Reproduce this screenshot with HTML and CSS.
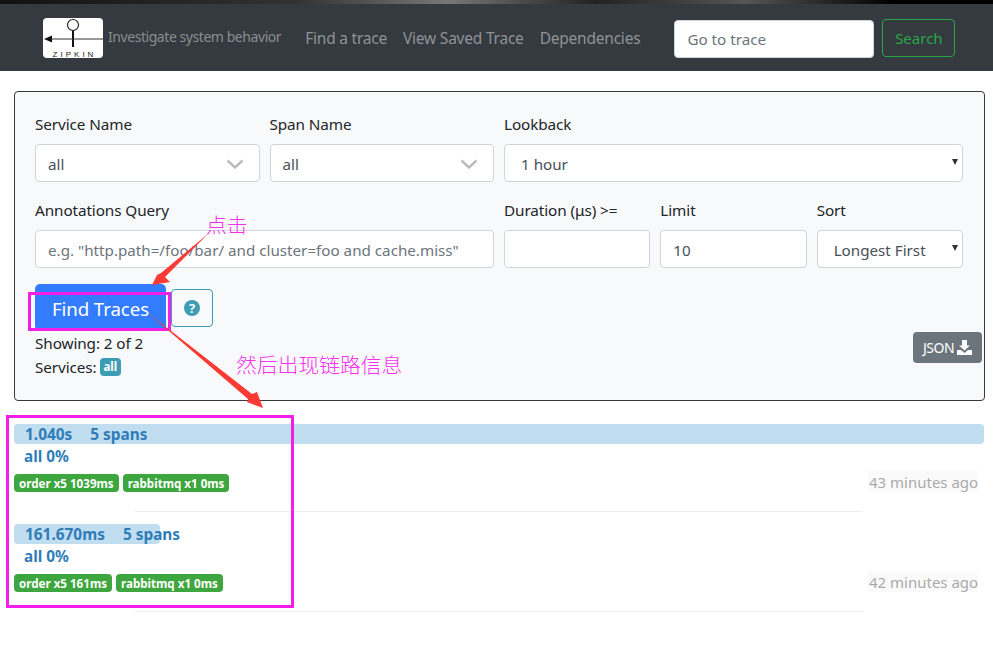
FILE: index.html
```html
<!DOCTYPE html>
<html lang="en">
<head>
<meta charset="utf-8">
<title>Zipkin</title>
<link rel="stylesheet" href="styles.css">
</head>
<body>
<div class="strip"></div>
<nav class="nav">
  <svg class="logo" width="60" height="40" viewBox="0 0 60 40">
    <rect width="60" height="40" rx="4" fill="#fff"/>
    <circle cx="30" cy="7" r="5.5" fill="none" stroke="#222" stroke-width="1.2"/>
    <path d="M30 12.5V29" stroke="#111" stroke-width="2"/>
    <path d="M8 21H60" stroke="#333" stroke-width="1.200"/>
    <path d="M1 21L9 17.500V24.500Z" fill="#111"/>
    <text class="logo-text" x="31.500" y="39.300" text-anchor="middle">ZIPKIN</text>
  </svg>
  <span class="tagline">Investigate system behavior</span>
  <a class="nav-link nav-first">Find a trace</a>
  <a class="nav-link">View Saved Trace</a>
  <a class="nav-link">Dependencies</a>
  <input class="goto" placeholder="Go to trace">
  <button class="search">Search</button>
</nav>

<main class="main">
  <section class="card">
    <div class="grid">
      <div class="field c3">
        <label>Service Name</label>
        <div class="control combo"><span>all</span>
          <svg width="18" height="10" viewBox="0 0 18 10"><path d="M1.5 1.5L9 8.5L16.500 1.5" fill="none" stroke="#bbb" stroke-width="2.400"/></svg>
        </div>
      </div>
      <div class="field c3">
        <label>Span Name</label>
        <div class="control combo"><span>all</span>
          <svg width="18" height="10" viewBox="0 0 18 10"><path d="M1.5 1.5L9 8.5L16.500 1.5" fill="none" stroke="#bbb" stroke-width="2.400"/></svg>
        </div>
      </div>
      <div class="field c6">
        <label>Lookback</label>
        <div class="control select"><span>1 hour</span><i class="caret"></i></div>
      </div>
      <div class="field c6">
        <label>Annotations Query</label>
        <input class="control" placeholder="e.g. &quot;http.path=/foo/bar/ and cluster=foo and cache.miss&quot;">
      </div>
      <div class="field c2">
        <label>Duration (μs) &gt;=</label>
        <input class="control">
      </div>
      <div class="field c2">
        <label>Limit</label>
        <input class="control" value="10">
      </div>
      <div class="field c2">
        <label>Sort</label>
        <div class="control select"><span>Longest First</span><i class="caret"></i></div>
      </div>
    </div>
    <div class="actions">
      <button class="find">Find Traces</button>
      <button class="help">
        <svg width="16" height="16" viewBox="0 0 16 16"><circle cx="8" cy="8" r="8" fill="#3c9db5"/><text class="help-mark" x="8" y="12.500" text-anchor="middle">?</text></svg>
      </button>
    </div>
    <div class="meta-row">
      <div class="meta">
        <div>Showing: 2 of 2</div>
        <div class="services">Services: <span class="pill">all</span></div>
      </div>
      <button class="json">JSON
        <svg width="15" height="15" viewBox="0 0 15 15"><path d="M5 0H10V5.500H13L7.500 10.500L2 5.500H5Z" fill="#fff"/><path d="M0 10H4L7.500 13L11 10H15V15H0Z" fill="#fff"/></svg>
      </button>
    </div>
  </section>

  <section class="traces">
    <article class="trace">
      <div class="bar-row">
        <div class="bar bar-full"></div>
        <div class="bar-text"><span class="dur">1.040s</span><span>5 spans</span></div>
      </div>
      <div class="pct">all 0%</div>
      <div class="tag-row">
        <span class="tag">order x5 1039ms</span><span class="tag">rabbitmq x1 0ms</span>
        <time class="ago">43 minutes ago</time>
      </div>
      <div class="rule"></div>
    </article>
    <article class="trace">
      <div class="bar-row">
        <div class="bar bar-short"></div>
        <div class="bar-text"><span class="dur">161.670ms</span><span>5 spans</span></div>
      </div>
      <div class="pct">all 0%</div>
      <div class="tag-row">
        <span class="tag">order x5 161ms</span><span class="tag">rabbitmq x1 0ms</span>
        <time class="ago">42 minutes ago</time>
      </div>
      <div class="rule"></div>
    </article>
  </section>
</main>

<div class="mark mark-btn"></div>
<div class="mark mark-list"></div>
<svg class="arrows" width="993" height="660" viewBox="0 0 993 660">
  <path d="M209 233L165 277L170 282L152 285L157 275L161 273Z" fill="#f93a35"/>
  <path d="M148 313L252 394L257 392L263 408L247 402L248 399Z" fill="#f93a35"/>
</svg>
<div class="note note-click">点击</div>
<div class="note note-then">然后出现链路信息</div>
</body>
</html>
```
FILE: styles.css
```css
* { box-sizing: border-box; }
html, body { margin: 0; padding: 0; }
body {
  position: relative;
  width: 993px;
  height: 660px;
  overflow: hidden;
  background: #fff;
  color: #212529;
  font-family: "Noto Sans", "Open Sans", sans-serif;
  font-size: 15.300px;
  line-height: 24px;
}
.strip {
  height: 4px;
  background: linear-gradient(90deg, #111 0, #333 30%, #777 45%, #222 60%, #555 75%, #000 90%);
}
.nav {
  height: 67px;
  background: #343a40;
  display: flex;
  align-items: center;
  padding-left: 43px;
}
.logo { flex: none; }
.logo-text { font: 8px "Liberation Sans", sans-serif; letter-spacing: 3px; fill: #222; }
.tagline { margin-left: 5px; color: #8a8d90; font-size: 14px; margin-top: -1px; letter-spacing: -.44px; white-space: nowrap; }
.nav-link { color: #8f9295; font-size: 15.500px; margin-left: 16px; letter-spacing: -.22px; white-space: nowrap; }
.nav-first { margin-left: 24px; }
.goto {
  flex: none;
  width: 200px;
  height: 38px;
  margin-left: 34px;
  margin-top: 2px;
  padding: 0 12px;
  border: 1px solid #ced4da;
  border-radius: 4px;
  background: #fff;
  font: 15.200px "Noto Sans", sans-serif;
}
.goto::placeholder { color: #6c757d; opacity: 1; }
.search {
  flex: none;
  width: 73px;
  height: 38px;
  margin-left: 8px;
  padding: 0;
  border: 1px solid #28a745;
  border-radius: 4px;
  background: transparent;
  color: #28a745;
  font: 15px "Noto Sans", sans-serif;
}
.main { padding: 20px 9px 0 14px; }
.card {
  position: relative;
  width: 971px;
  height: 310px;
  padding: 20px;
  background: #f8f9fa;
  border: 1px solid #343a40;
  border-radius: 4px;
}
.grid {
  display: grid;
  grid-template-columns: repeat(12, 1fr);
  column-gap: 10px;
  row-gap: 16px;
  width: 928px;
}
.c2 { grid-column: span 2; }
.c3 { grid-column: span 3; }
.c6 { grid-column: span 6; }
.field label { display: block; height: 24px; margin-bottom: 8px; white-space: nowrap; font-size: 15.300px; letter-spacing: -.1px; }
.control {
  display: flex;
  align-items: center;
  width: 100%;
  height: 38px;
  padding: 1px 12px 0;
  background: #fff;
  border: 1px solid #ced4da;
  border-radius: 4px;
  color: #495057;
  font: 15.200px "Noto Sans", sans-serif;
}
.control::placeholder { color: #6c757d; opacity: 1; }
.combo { justify-content: space-between; padding-right: 15px; }
.select { padding-left: 16px; justify-content: space-between; padding-right: 4px; }
.caret {
  width: 0;
  height: 0;
  margin-top: -3px;
  border-left: 3.500px solid transparent;
  border-right: 3.500px solid transparent;
  border-top: 6px solid #333;
}
.actions { display: flex; align-items: flex-end; margin-top: 16px; height: 43px; }
.find {
  width: 131px;
  height: 47px;
  padding: 1px 0 0;
  background: #337cff;
  border: 0;
  border-radius: 5px;
  color: #fff;
  font: 18.700px "Noto Sans", sans-serif;
  letter-spacing: -.1px;
  align-self: flex-start;
}
.help {
  width: 42px;
  height: 38px;
  margin-left: 5px;
  padding: 0;
  align-self: flex-start;
  margin-top: 5px;
  background: transparent;
  border: 1px solid #3c9db5;
  border-radius: 4px;
  display: flex;
  align-items: center;
  justify-content: center;
}
.help-mark { font: 700 13px "Noto Sans", sans-serif; fill: #f8f9fa; }
.meta-row { display: flex; justify-content: space-between; align-items: flex-start; }
.meta { margin-top: 4px; font-size: 15.300px; letter-spacing: -.1px; }
.services { display: flex; align-items: center; gap: 3px; }
.pill {
  display: inline-block;
  height: 18px;
  padding: 0 4px;
  background: #3c9db5;
  border-radius: 4px;
  color: #fff;
  font-size: 11.500px;
  font-weight: 700;
  line-height: 18px;
}
.json {
  position: absolute;
  right: 2px;
  top: 240px;
  width: 69px;
  height: 31px;
  padding: 0;
  background: #6c757d;
  border: 0;
  border-radius: 4px;
  color: #fff;
  font: 14px "Noto Sans", sans-serif;
  letter-spacing: -.5px;
  display: flex;
  align-items: center;
  justify-content: center;
  gap: 3px;
}
.traces { margin-top: 23px; }
.trace { height: 100px; color: #2f7db8; font-weight: 700; }
.bar-row { position: relative; height: 20px; }
.bar { height: 20px; background: #c1ddf0; border-radius: 4px; }
.bar-full { width: 970px; }
.bar-short { width: 146px; }
.bar-text {
  position: absolute;
  left: 11px;
  top: 0;
  display: flex;
  gap: 18px;
  font-size: 15.400px;
  line-height: 22px;
  white-space: nowrap;
}
.pct { margin: 0 0 0 10px; height: 25px; font-size: 15.300px; line-height: 24px; }
.tag-row { position: relative; display: flex; gap: 4px; margin-top: 5px; height: 18px; }
.tag {
  height: 18px;
  padding: 0 5px;
  background: #3ea63e;
  border-radius: 4px;
  color: #fff;
  font-size: 11.600px;
  line-height: 19px;
  white-space: nowrap;
}
.ago {
  position: absolute;
  right: 6px;
  top: -3px;
  width: 110px;
  height: 21px;
  padding-left: 1px;
  background: #fafafa;
  color: #aaa;
  font-size: 15px;
  font-weight: 400;
  line-height: 22px;
  white-space: nowrap;
}
.rule { width: 728px; height: 1px; margin: 19px 0 0 121px; background: #eeeff0; }

.mark { position: absolute; border: 3px solid #f31ee8; }
.mark-btn { left: 28px; top: 292px; width: 143px; height: 39px; }
.mark-list { left: 6px; top: 415px; width: 288px; height: 193px; }
.arrows { position: absolute; left: 0; top: 0; pointer-events: none; }
.note {
  position: absolute;
  color: #f531ee;
  font-family: "Noto Sans CJK SC", sans-serif;
  font-size: 20.800px;
  font-weight: 300;
  line-height: 26px;
  white-space: nowrap;
}
.note-click { left: 206px; top: 211px; }
.note-then { left: 236px; top: 351px; }
```
